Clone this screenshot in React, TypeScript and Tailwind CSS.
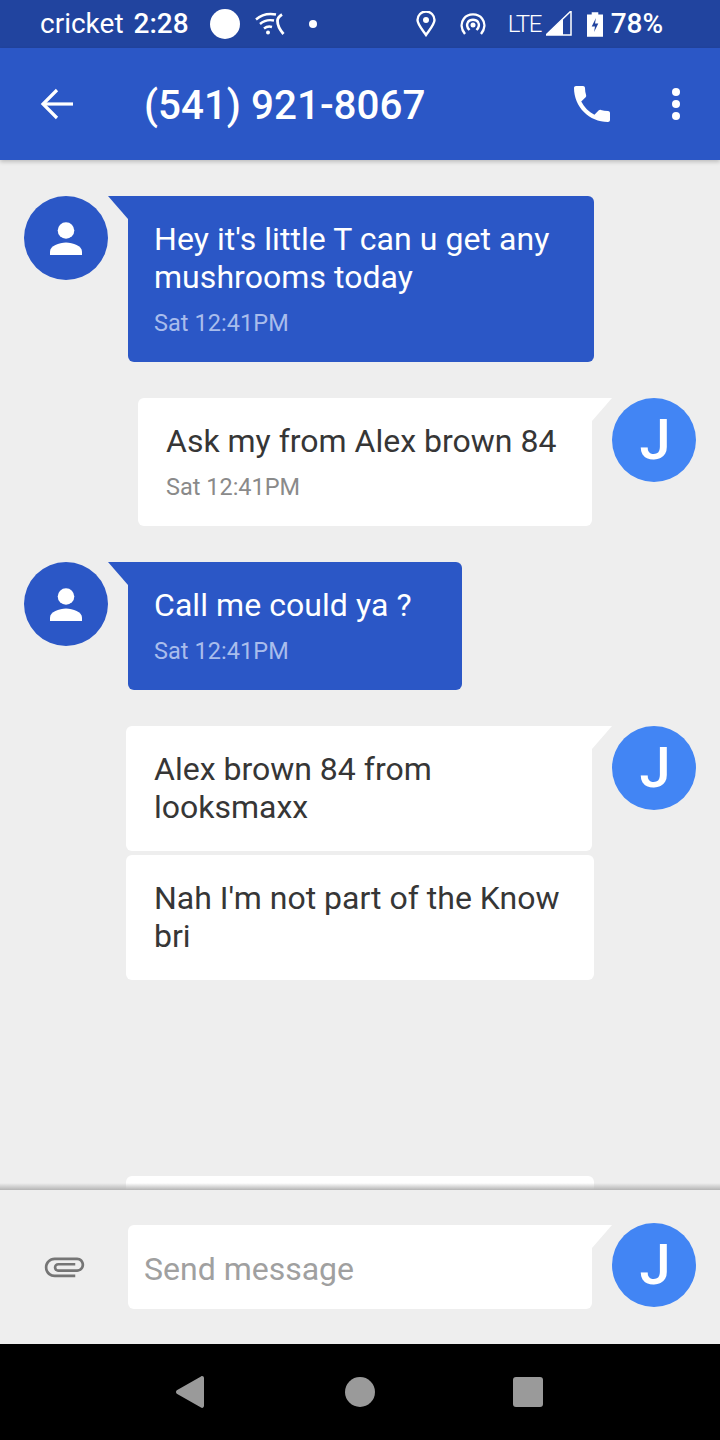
import { ReactNode } from "react"

const Avatar = () => (
  <div className="w-[84px] h-[84px] shrink-0 rounded-full bg-[#4285f4] flex items-center justify-center pl-[2px] text-white text-[56px] leading-none font-medium">
    J
  </div>
)

const PersonAvatar = () => (
  <div className="w-[84px] h-[84px] shrink-0 rounded-full bg-[#2b57c6] flex items-center justify-center">
    <svg width="32" height="33" viewBox="0 0 32 33" fill="white">
      <circle cx="16" cy="8.500" r="8.300" />
      <path d="M0 33v-3.500C0 24 9 20.500 16 20.500S32 24 32 29.500V33z" />
    </svg>
  </div>
)

function Bubble({ out, width, children }: { out?: boolean; width: string; children: ReactNode }) {
  return (
    <div className={`relative ${width} rounded-md pt-6 ${out ? "px-[28px] bg-white text-[#363636] rounded-tr-none" : "px-[26px] bg-[#2b57c6] text-white rounded-tl-none tracking-[0.06px]"}`}>
      {out ? (
        <svg className="absolute top-0 left-full" width="20" height="23" viewBox="0 0 20 23" fill="white">
          <polygon points="0,0 20,0 0,23" />
        </svg>
      ) : (
        <svg className="absolute top-0 right-full" width="20" height="23" viewBox="0 0 20 23" fill="#2b57c6">
          <polygon points="0,0 20,0 20,23" />
        </svg>
      )}
      {children}
    </div>
  )
}

const Body = ({ children }: { children: ReactNode }) => (
  <p className="text-[32px] leading-[38px]">{children}</p>
)

const Stamp = ({ out }: { out?: boolean }) => (
  <p className={`mt-[13px] mb-[25px] text-[23.500px] leading-[28px] ${out ? "text-[#8a8a8a]" : "text-[#a9bdec]"}`}>Sat 12:41PM</p>
)

export default function App() {
  return (
    <div className="w-[720px] h-[1440px] flex flex-col bg-[#eeeeee] overflow-hidden font-['Roboto',sans-serif]">
      {/* status bar */}
      <div className="h-12 shrink-0 bg-[#21449f] flex items-center text-white pl-10 relative">
        <span className="text-[28px] leading-none">cricket</span>
        <span className="ml-[10px] text-[28px] leading-none font-medium">2:28</span>
        <span className="ml-[21px] w-[30px] h-[30px] rounded-full bg-white" />
        <svg className="ml-[15px]" width="30" height="24" viewBox="0 0 30 24" fill="none" stroke="white" strokeWidth="2.400">
          <path d="M1 7.500C6 3 13 1 21 2.500" />
          <path d="M5 12c4-3.500 9-4.500 14-3.500" />
          <path d="M9 16.500c2.500-2 5-2.500 8-1.500" />
          <circle cx="13" cy="20.500" r="2" fill="white" stroke="none" />
          <path d="M27 2.500c-2.500 1.500-4.500 3.500-4.500 6.500 0 5 2.500 9 6 13" strokeWidth="2.800" />
        </svg>
        <span className="ml-[24px] w-2 h-2 rounded-full bg-white" />
        <svg className="ml-[98px]" width="22" height="26" viewBox="0 0 22 26" fill="none">
          <path d="M11 24C6 17 2.500 13 2.500 9a8.500 8.500 0 0 1 17 0c0 4-3.500 8-8.500 15z" stroke="white" strokeWidth="2.400" />
          <circle cx="11" cy="9" r="3" fill="white" />
        </svg>
        <svg className="ml-[23px]" width="26" height="24" viewBox="0 0 26 24" fill="none" stroke="white" strokeWidth="2.400">
          <path d="M5 22C1 17 0.500 11 4 6.500 8 1 18 1 22 6.500c3.500 4.500 3 10.500-1 15.500" />
          <path d="M9.500 18C7 15.500 6.500 12.500 8 10c2-3 8-3 10 0 1.500 2.500 1 5.500-1.500 8" />
          <circle cx="13" cy="13" r="2.500" fill="white" stroke="none" />
        </svg>
        <span className="ml-[22px] w-[33px] text-[24px] leading-none font-light tracking-[-1.300px]">LTE</span>
        <svg className="ml-[5px]" width="26" height="26" viewBox="0 0 26 26">
          <polygon points="0,24 25,0 25,24" fill="none" stroke="white" strokeWidth="1.500" />
          <polygon points="0,24 17,8 17,24" fill="white" />
        </svg>
        <svg className="ml-[15px]" width="16" height="25" viewBox="0 0 17 26">
          <path d="M5 0h7v2.500h5V26H0V2.500h5z" fill="white" />
          <path d="M9.500 6 5 15h3.500l-1 6 4.500-9H8.500z" fill="#21449f" />
        </svg>
        <span className="ml-[8px] text-[28px] leading-none font-medium">78%</span>
      </div>

      {/* toolbar */}
      <div className="h-28 shrink-0 bg-[#2b57c6] flex items-center text-white pl-10 relative z-10 shadow-[0_2px_4px_rgba(0,0,0,0.2)]">
        <svg width="34" height="32" viewBox="0 0 34 32" fill="none" stroke="white" strokeWidth="3.200">
          <path d="M33 16H3" />
          <path d="M17 2 3 16l14 14" />
        </svg>
        <h1 className="ml-[70px] pt-[5px] w-[284px] text-[40.400px] leading-none font-medium whitespace-nowrap">(541) 921-8067</h1>
        <svg className="ml-[140px]" width="48" height="48" viewBox="0 0 24 24" fill="white">
          <path d="M6.620 10.790c1.440 2.830 3.760 5.140 6.590 6.590l2.200-2.200c.27-.27.67-.36 1.020-.24 1.120.37 2.330.57 3.570.57.55 0 1 .45 1 1V20c0 .55-.45 1-1 1-9.390 0-17-7.610-17-17 0-.55.45-1 1-1h3.500c.55 0 1 .45 1 1 0 1.250.2 2.450.57 3.570.11.35.03.74-.25 1.020l-2.200 2.200z" />
        </svg>
        <div className="ml-[56px] flex flex-col gap-[4px]">
          <span className="w-2 h-2 rounded-full bg-white" />
          <span className="w-2 h-2 rounded-full bg-white" />
          <span className="w-2 h-2 rounded-full bg-white" />
        </div>
      </div>

      {/* messages */}
      <div className="relative flex-1 min-h-0 overflow-hidden pt-9">
        <div className="flex pl-6 gap-5">
          <PersonAvatar />
          <Bubble width="w-[466px]">
            <Body>Hey it's little T can u get any mushrooms today</Body>
            <Stamp />
          </Bubble>
        </div>

        <div className="flex justify-end pr-6 gap-5 mt-9">
          <Bubble out width="w-[454px]">
            <Body>Ask my from Alex brown 84</Body>
            <Stamp out />
          </Bubble>
          <Avatar />
        </div>

        <div className="flex pl-6 gap-5 mt-9">
          <PersonAvatar />
          <Bubble width="w-[334px]">
            <Body>Call me could ya ?</Body>
            <Stamp />
          </Bubble>
        </div>

        <div className="flex justify-end pr-6 gap-5 mt-9">
          <Bubble out width="w-[466px]">
            <div className="h-[101px]">
              <Body>Alex brown 84 from looksmaxx</Body>
            </div>
          </Bubble>
          <Avatar />
        </div>

        <div className="ml-[126px] w-[468px] h-[125px] mt-1 bg-white rounded-md px-[28px] pt-6 text-[#363636]">
          <Body>Nah I'm not part of the Know bri</Body>
        </div>

        <div className="ml-[126px] w-[468px] h-[125px] mt-[196px] bg-white rounded-md" />

        <div className="absolute inset-x-0 bottom-0 h-[7px] bg-gradient-to-b from-transparent to-[#b4b4b4]" />
      </div>

      {/* composer */}
      <div className="h-[154px] shrink-0 flex pl-[128px] pr-6 pt-[33px] gap-5 relative">
        <svg className="absolute left-[43px] top-[55px]" width="43" height="43" viewBox="0 0 24 24" fill="#757575">
          <path transform="rotate(90 12 12)" d="M16.500 6v11.500c0 2.210-1.790 4-4 4s-4-1.790-4-4V5c0-1.380 1.120-2.500 2.500-2.500s2.500 1.120 2.500 2.500v10.500c0 .55-.45 1-1 1s-1-.45-1-1V6H10v9.500c0 1.380 1.120 2.500 2.500 2.500s2.500-1.120 2.500-2.500V5c0-2.210-1.790-4-4-4S7 2.790 7 5v12.500c0 3.040 2.460 5.500 5.500 5.500s5.500-2.460 5.500-5.500V6h-1.500z" />
        </svg>
        <div className="relative w-[464px] h-[84px] mt-[2px] bg-white rounded-md rounded-tr-none flex items-center px-4 pt-[3px] text-[32px] text-[#a0a0a0]">
          <svg className="absolute top-0 left-full" width="20" height="23" viewBox="0 0 20 23" fill="white">
            <polygon points="0,0 20,0 0,23" />
          </svg>
          Send message
        </div>
        <Avatar />
      </div>

      {/* nav bar */}
      <div className="h-24 shrink-0 bg-black flex items-center pl-[176px]">
        <svg width="28" height="32" viewBox="0 0 28 32" fill="#9a9a9a">
          <path d="M0.800 14.200 25 .4c1.500-.8 3 .2 3 1.800v27.600c0 1.600-1.500 2.600-3 1.800L.8 17.800c-1.100-.8-1.100-2.800 0-3.600z" />
        </svg>
        <span className="ml-[141px] w-[30px] h-[30px] rounded-full bg-[#9a9a9a]" />
        <span className="ml-[138px] w-[30px] h-[30px] rounded-[3px] bg-[#9a9a9a]" />
      </div>
    </div>
  )
}
